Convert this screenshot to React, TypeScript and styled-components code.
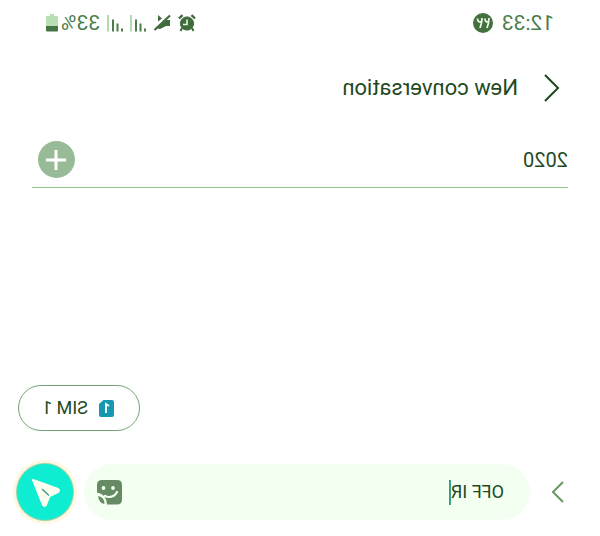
import React, { useState } from "react";
import styled, { createGlobalStyle } from "styled-components";

const GlobalStyle = createGlobalStyle`
  * { box-sizing: border-box; }
  body { margin: 0; background: #fff; }
  button, input { font: inherit; color: inherit; border: 0; padding: 0; margin: 0; background: none; }
  button { cursor: pointer; }
  svg { display: block; flex: none; }
`;

const Screen = styled.main`
  min-height: 100vh;
  display: flex;
  flex-direction: column;
  overflow: hidden;
  background: #fff;
  color: #1f4a1f;
  font-family: Roboto, "Liberation Sans", sans-serif;
  transform: scaleX(-1);
`;

const StatusBar = styled.header`
  display: flex;
  align-items: center;
  justify-content: space-between;
  height: 46px;
  padding: 0 46px;
  font-size: 21px;
  line-height: 24px;
  color: #4a7d4a;
`;

const StatusGroup = styled.div<{ $gap: number }>`
  display: flex;
  align-items: center;
  gap: ${({ $gap }) => $gap}px;
`;

const AppBadge = styled.span`
  display: flex;
  align-items: center;
  justify-content: center;
  width: 20px;
  height: 20px;
  border-radius: 50%;
  background: #43703f;
`;

const TitleBar = styled.div`
  display: flex;
  align-items: center;
  gap: 26px;
  height: 84px;
  padding-left: 40px;
`;

const IconButton = styled.button`
  display: flex;
  align-items: center;
  justify-content: center;
  flex: none;
`;

const Title = styled.h1`
  margin: 0;
  font-size: 22px;
  line-height: 28px;
  font-weight: 400;
`;

const RecipientRow = styled.div`
  display: flex;
  align-items: center;
  justify-content: space-between;
  height: 58px;
  margin: 0 32px;
  padding: 2px 6px 0 0;
  border-bottom: 1px solid #8fc88a;
`;

const RecipientInput = styled.input`
  flex: 1;
  min-width: 0;
  font-size: 20px;
  line-height: 24px;
  outline: none;
`;

const AddButton = styled(IconButton)`
  width: 37px;
  height: 37px;
  border-radius: 50%;
  background: #98bb97;
`;

const Messages = styled.section`
  flex: 1;
  display: flex;
  align-items: flex-end;
  justify-content: flex-end;
  padding: 0 18px 0 0;
`;

const SimButton = styled.button`
  display: flex;
  align-items: center;
  gap: 11px;
  height: 46px;
  padding: 0 23px 0 25px;
  border: 1px solid #75a373;
  border-radius: 23px;
  font-size: 18px;
  line-height: 24px;
`;

const Composer = styled.form`
  display: flex;
  align-items: center;
  margin-top: 33px;
  padding: 0 17px 16px 36px;
`;

const Field = styled.div`
  flex: 1;
  display: flex;
  align-items: center;
  height: 56px;
  margin: 0 11px 0 22px;
  padding: 0 13px 0 26px;
  border-radius: 28px;
  background: #f2fff1;
`;

const MessageInput = styled.input`
  field-sizing: content;
  font-size: 18px;
  line-height: 24px;
  outline: none;
  caret-color: transparent;
`;

const Caret = styled.span`
  width: 2px;
  height: 25px;
  margin-right: auto;
  background: #3da08c;
`;

const SendButton = styled(IconButton)`
  width: 56px;
  height: 56px;
  border-radius: 50%;
  background: #0eecd2;
  box-shadow: 0 0 0 1px #8fd6a8, 0 0 2px 4px #fff6df;
`;

const AlarmIcon = () => (
  <svg width="18" height="18" viewBox="0 0 18 18" fill="none" stroke="#3f6b3d" aria-label="Alarm">
    <circle cx="9" cy="9.5" r="6.6" fill="#3f6b3d" />
    <path d="M1 4.5 4.5 1.2M17 4.5l-3.500-3.300" strokeWidth="2.400" />
    <path d="m4 14-1.500 3M14 14l1.500 3" strokeWidth="2" />
    <path d="M9 5.500V10.500h4" stroke="#e6f4e4" strokeWidth="1.600" />
  </svg>
);

const MuteIcon = () => (
  <svg width="18" height="18" viewBox="0 0 18 18" aria-label="Muted">
    <path d="M1 6h4l9 8.500-3 .5-6-3H1z" fill="#3f6b3d" />
    <path d="M9 4.500 13 1v6.500z" fill="#3f6b3d" />
    <path d="M1 1.500 16.500 16" stroke="#3f6b3d" strokeWidth="2.200" />
  </svg>
);

const SignalIcon = () => (
  <svg width="16" height="17" viewBox="0 0 16 17" strokeWidth="2" aria-label="Signal">
    <path d="M1 16.500v-3M5.500 16.500V8.500M10 16.500V4.500" stroke="#4b7d49" />
    <path d="M15 16.500V0" stroke="#b4dab0" />
  </svg>
);

const BatteryIcon = () => (
  <svg width="12" height="18" viewBox="0 0 12 18" aria-label="Battery">
    <path d="M4 0h4v2h3q1 0 1 1v9H0V3q0-1 1-1h3z" fill="#b8e0b3" />
    <path d="M0 12h12v4q0 1.500-1 1.500H1q-1 0-1-1.500z" fill="#477445" />
  </svg>
);

const SimIcon = () => (
  <svg width="15" height="17" viewBox="0 0 15 17">
    <path d="M2 0h8.500L15 4v11q0 2-2 2H2q-2 0-2-2V2q0-2 2-2z" fill="#1898b0" />
    <path d="M5 6 8 4v9" fill="none" stroke="#e9ffff" strokeWidth="2" />
  </svg>
);

const StickerIcon = () => (
  <svg width="25" height="25" viewBox="0 0 25 25">
    <path d="M5 0h15q5 0 5 5v7.500q-9 1-10 12H5q-5 0-5-5V5q0-5 5-5z" fill="#668b63" />
    <path d="M24 16q-1 7-6.500 8 0-7 6.500-8z" fill="#668b63" />
    <circle cx="9" cy="8" r="1.900" fill="#f2fff1" />
    <circle cx="18.500" cy="8" r="1.900" fill="#f2fff1" />
    <path d="M5 12q2.500 5 8 5 2 0 4-1" fill="none" stroke="#f2fff1" strokeWidth="2.200" strokeLinecap="round" />
  </svg>
);

const SendIcon = () => (
  <svg width="32" height="32" viewBox="0 0 32 32" strokeLinejoin="round" strokeLinecap="round">
    <path d="M28 4 3 13q-2 1.500 0 3l8.500 4 3.500 9q1.500 2 3 0z" fill="#fffff0" stroke="#fffff0" strokeWidth="2" />
    <path d="m12.500 19 6-5.500" stroke="#3fa08c" strokeWidth="1.600" />
  </svg>
);

export default function App() {
  const [recipient, setRecipient] = useState("2020");
  const [message, setMessage] = useState("OFF IR");
  return (
    <>
      <GlobalStyle />
      <Screen>
        <StatusBar>
          <StatusGroup $gap={9}>
            <time>12:33</time>
            <AppBadge>
              <svg width="16" height="12" viewBox="0 0 16 12" fill="none" stroke="#eaf6e8" strokeWidth="1.800">
                <path d="M2 1q0 5 2 10M2 4.500q4 1.500 4-3M9 1q0 5 2 10M9 4.500q4.500 1.500 4.500-3" />
              </svg>
            </AppBadge>
          </StatusGroup>
          <StatusGroup $gap={7}>
            <AlarmIcon />
            <MuteIcon />
            <SignalIcon />
            <SignalIcon />
            <StatusGroup $gap={3}>
              <span>33%</span>
              <BatteryIcon />
            </StatusGroup>
          </StatusGroup>
        </StatusBar>
        <TitleBar>
          <IconButton aria-label="Back">
            <svg width="16" height="28" viewBox="0 0 16 28" fill="none" stroke="#1c4a20" strokeWidth="2">
              <path d="M15 1 2 14l13 13" />
            </svg>
          </IconButton>
          <Title>New conversation</Title>
        </TitleBar>
        <RecipientRow>
          <RecipientInput aria-label="Recipient" value={recipient} onChange={(e) => setRecipient(e.target.value)} />
          <AddButton aria-label="Add recipient">
            <svg width="20" height="20" viewBox="0 0 20 20" stroke="#fff" strokeWidth="3">
              <path d="M10 0v20M0 10h20" />
            </svg>
          </AddButton>
        </RecipientRow>
        <Messages>
          <SimButton>
            <SimIcon />
            SIM 1
          </SimButton>
        </Messages>
        <Composer onSubmit={(e) => e.preventDefault()}>
          <IconButton type="button" aria-label="More options">
            <svg width="12" height="22" viewBox="0 0 12 22" fill="none" stroke="#6b976a" strokeWidth="2">
              <path d="m1 1 10 10L1 21" />
            </svg>
          </IconButton>
          <Field>
            <MessageInput aria-label="Message" value={message} onChange={(e) => setMessage(e.target.value)} />
            <Caret />
            <IconButton type="button" aria-label="Stickers">
              <StickerIcon />
            </IconButton>
          </Field>
          <SendButton type="submit" aria-label="Send">
            <SendIcon />
          </SendButton>
        </Composer>
      </Screen>
    </>
  );
}
